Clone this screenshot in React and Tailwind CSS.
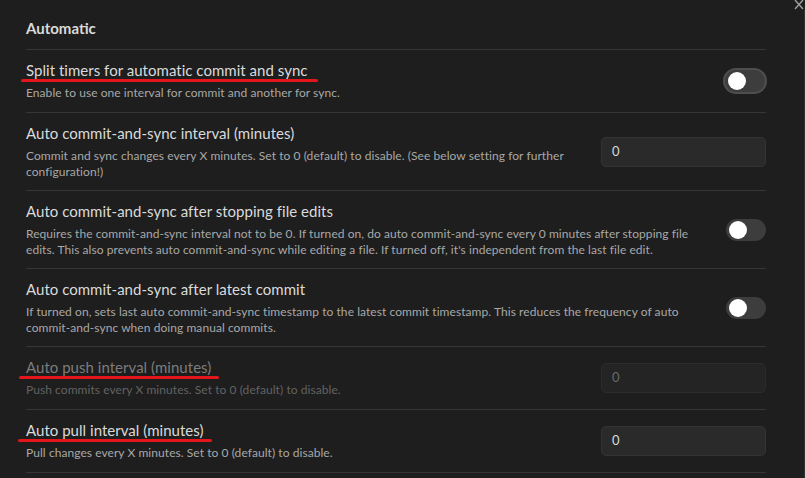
import React from "react";

const FONT = { fontFamily: "Lato, 'Noto Sans', sans-serif" };

function Toggle({ ring }) {
  return (
    <div
      className={
        "w-[40px] h-[22px] rounded-full bg-[#3d3d3d] flex items-center px-[3px] shrink-0 " +
        (ring ? "shadow-[0_0_0_2px_#4e4e4e]" : "")
      }
    >
      <div className="w-[18px] h-[18px] rounded-full bg-white" />
    </div>
  );
}

function Input({ disabled }) {
  return (
    <div
      className={
        "w-[165px] h-[30px] rounded-[5px] border flex items-center pl-[10px] text-[13px] shrink-0 " +
        (disabled
          ? "bg-[#242424] border-[#2c2c2c] text-[#6a6a6a]"
          : "bg-[#2a2a2a] border-[#343434] text-[#dadada]")
      }
    >
      0
    </div>
  );
}

function Row({ title, lines, control, disabled, underline, pb = "pb-[10px]" }) {
  return (
    <div className={"flex items-center border-b border-[#363636] pt-[11px] " + pb}>
      <div className="flex-1 flex flex-col">
        <div
          className={
            "relative text-[15px] leading-[18px] whitespace-nowrap tracking-[0.03px] " +
            (disabled ? "text-[#7c7c7c]" : "text-[#dadada]")
          }
        >
          {title}
          {underline && (
            <span
              className="absolute top-[18px] h-[3px] rounded-full bg-[#e3161b]"
              style={{ left: underline[0], width: underline[1] }}
            />
          )}
        </div>
        <div
          className={
            "mt-[6px] text-[12px] leading-[16px] whitespace-nowrap tracking-[0.06px] " +
            (disabled ? "text-[#626262]" : "text-[#a8a8a8]")
          }
        >
          {lines.map((l, i) => (
            <div key={i}>{l}</div>
          ))}
        </div>
      </div>
      {control}
    </div>
  );
}

export default function App() {
  return (
    <div
      className="w-[805px] h-[478px] bg-[#1e1e1e] overflow-hidden relative flex"
      style={FONT}
    >
      <div className="flex-1 pl-[26px] pr-[38px]">
        <div className="h-[50px] border-b border-[#363636] pt-[18px]">
          <div className="text-[15px] leading-[20px] font-bold text-[#dadada]">
            Automatic
          </div>
        </div>
        <Row
          title="Split timers for automatic commit and sync"
          lines={["Enable to use one interval for commit and another for sync."]}
          control={<div className="mr-[1px]"><Toggle ring /></div>}
          underline={[-5, 297]}
          pb="pb-[11px]"
        />
        <Row
          title="Auto commit-and-sync interval (minutes)"
          lines={[
            "Commit and sync changes every X minutes. Set to 0 (default) to disable. (See below setting for further",
            "configuration!)",
          ]}
          control={<Input />}
        />
        <Row
          title="Auto commit-and-sync after stopping file edits"
          lines={[
            "Requires the commit-and-sync interval not to be 0. If turned on, do auto commit-and-sync every 0 minutes after stopping file",
            "edits. This also prevents auto commit-and-sync while editing a file. If turned off, it's independent from the last file edit.",
          ]}
          control={<Toggle />}
        />
        <Row
          title="Auto commit-and-sync after latest commit"
          lines={[
            "If turned on, sets last auto commit-and-sync timestamp to the latest commit timestamp. This reduces the frequency of auto",
            "commit-and-sync when doing manual commits.",
          ]}
          control={<Toggle />}
        />
        <Row
          title="Auto push interval (minutes)"
          lines={["Push commits every X minutes. Set to 0 (default) to disable."]}
          control={<Input disabled />}
          disabled
          underline={[-7, 200]}
          pb="pb-[11px]"
        />
        <Row
          title="Auto pull interval (minutes)"
          lines={["Pull changes every X minutes. Set to 0 (default) to disable."]}
          control={<Input />}
          underline={[-8, 194]}
          pb="pb-[11px]"
        />
      </div>
      <div className="w-[1px] bg-[#333333] mt-[10px]" />
      <svg
        className="absolute right-[1px] top-0"
        width="10"
        height="11"
        viewBox="0 0 10 11"
      >
        <path d="M1 0 L9 9 M9 0 L1 9" stroke="#a0a0a0" strokeWidth="1.4" />
      </svg>
    </div>
  );
}
